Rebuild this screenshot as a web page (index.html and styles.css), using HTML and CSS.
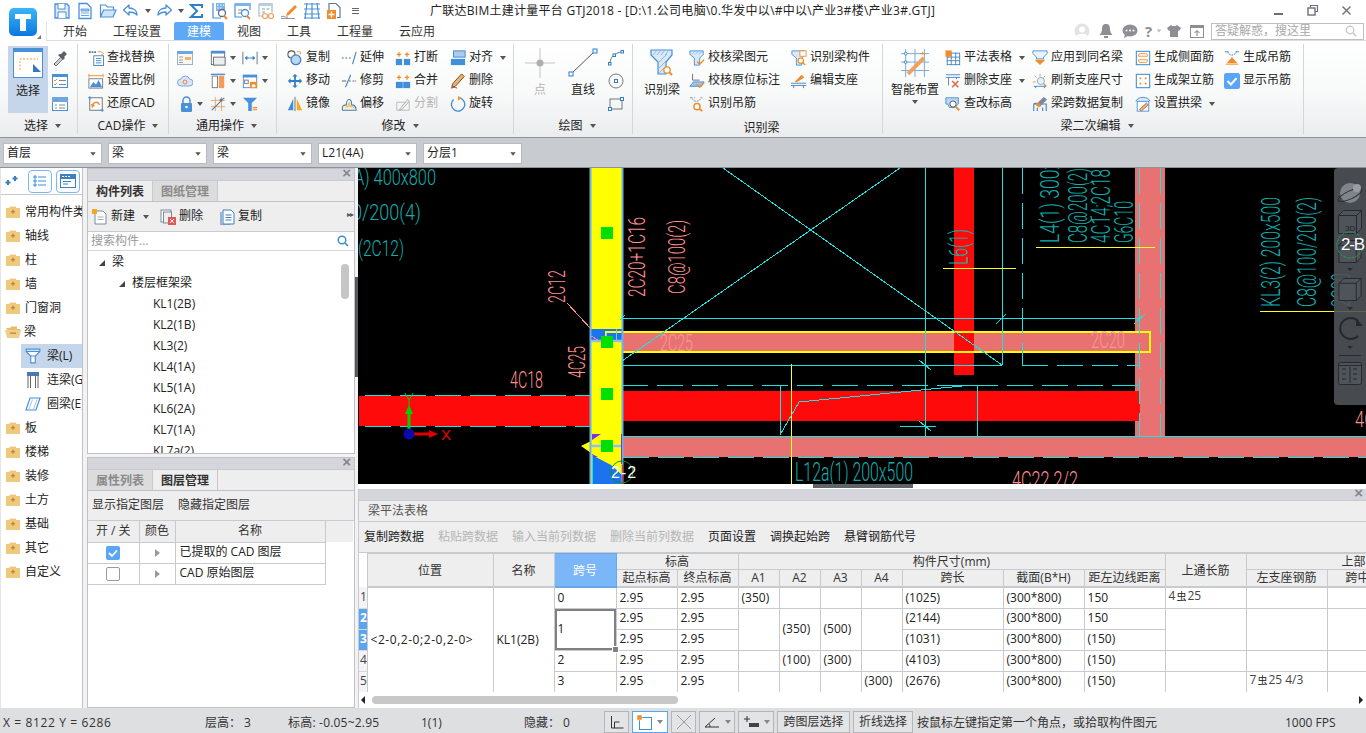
FILE: index.html
```html
<!DOCTYPE html>
<html lang="zh-CN">
<head>
<meta charset="utf-8">
<title>广联达BIM土建计量平台 GTJ2018</title>
<link rel="stylesheet" href="styles.css">
</head>
<body>
<svg class="sprite" xmlns="http://www.w3.org/2000/svg">
<defs>
<linearGradient id="lg" x1="0" y1="0" x2="0" y2="1"><stop offset="0" stop-color="#39b6f6"/><stop offset="1" stop-color="#0b78e0"/></linearGradient>
<symbol id="q-save" viewBox="0 0 18 18"><path d="M2 2h12l2 2v12H2z" fill="#dcebfa" stroke="#4a90d9" stroke-width="1.3"/><path d="M5 2v5h7V2M5 16v-6h8v6" fill="#fff" stroke="#4a90d9"/></symbol>
<symbol id="q-new" viewBox="0 0 18 18"><path d="M3 1.500h8l4 4v11H3z" fill="#fff" stroke="#4a90d9" stroke-width="1.3"/><path d="M5 7h8v2H5zM5 11h8M5 13.500h8" fill="#a9cdf0" stroke="#4a90d9" stroke-width=".8"/></symbol>
<symbol id="q-open" viewBox="0 0 18 18"><path d="M1.500 15V3h5l2 2h6v3" fill="#fff" stroke="#4a90d9" stroke-width="1.200"/><path d="M1.500 15l3-7h12.500l-3 7z" fill="#cfe4f8" stroke="#4a90d9" stroke-width="1.200"/></symbol>
<symbol id="q-undo" viewBox="0 0 18 18"><path d="M7 3L1.500 8 7 13v-3c4 0 6 1 8 3 0-4-3-7-8-7z" fill="#fff" stroke="#4a90d9" stroke-width="1.300" stroke-linejoin="round"/></symbol>
<symbol id="q-redo" viewBox="0 0 18 18"><path d="M11 3l5.500 5L11 13v-3c-4 0-6 1-8 3 0-4 3-7 8-7z" fill="#fff" stroke="#4a90d9" stroke-width="1.300" stroke-linejoin="round"/></symbol>
<symbol id="q-sum" viewBox="0 0 18 18"><path d="M3 3h11v3M14 3H3l6 6-6 6h11v-3" fill="none" stroke="#2f7fc9" stroke-width="2"/></symbol>
<symbol id="q-a" viewBox="0 0 18 18"><path d="M2 1v15h8" fill="none" stroke="#4a90d9" stroke-width="1.200"/><path d="M5 1h9v8H5z" fill="#7fb4e8"/><path d="M6 3h1.500M9 3h1.500M12 3h1.500M6 6h1.500M9 6h1.500" stroke="#fff"/><circle cx="11" cy="11" r="3.500" fill="#fff" stroke="#5a6d80" stroke-width="1.300"/><path d="M13 14l3 3" stroke="#f28c28" stroke-width="2"/></symbol>
<symbol id="q-b" viewBox="0 0 18 18"><path d="M1 1.500h15V8M1 1.500V15h7" fill="#fff" stroke="#4a90d9" stroke-width="1.200"/><path d="M1 1h15v3H1z" fill="#7fb4e8"/><path d="M4 8h4M4 11h3" stroke="#888"/><circle cx="11" cy="11" r="3.500" fill="#fff" stroke="#4a90d9" stroke-width="1.300"/><path d="M13 14l3 3" stroke="#f28c28" stroke-width="2"/></symbol>
<symbol id="q-c" viewBox="0 0 18 18"><path d="M2 1.500h13v9M2 1.500V14h4" fill="#fff" stroke="#a9b8c8" stroke-width="1.200"/><path d="M2 1h13v3H2z" fill="#b9cde2"/><path d="M5 7h3M9.500 7h3M5 10h3" stroke="#7a9"/><circle cx="8" cy="14" r="2.500" fill="#fff" stroke="#f2a061" stroke-width="1.200"/><circle cx="14" cy="14" r="2.500" fill="#fff" stroke="#f2a061" stroke-width="1.200"/></symbol>
<symbol id="q-brush" viewBox="0 0 18 18"><path d="M7 11l8-8 2 2-8 8-3 1z" fill="#f28c28"/><path d="M1 15c3-2 4 1 7 0" fill="none" stroke="#888"/><path d="M1 16.500h14" stroke="#999"/></symbol>
<symbol id="q-grid" viewBox="0 0 18 18"><path d="M1 2h16M1 7h16M1 12h16M1 16h16M4 1l-2 16M9 1v16M14 1l2 16" fill="none" stroke="#4a90d9" stroke-width="1.200"/></symbol>
<symbol id="q-plus" viewBox="0 0 18 18"><path d="M3 8V1.500h7l4 4v10h-3" fill="#fff" stroke="#5a7a9a" stroke-width="1.200"/><path d="M1 8h9v9H1z" fill="#f28c28"/><path d="M5.500 9.500v6M2.500 12.500h6" stroke="#fff" stroke-width="1.400"/></symbol>

<symbol id="r-select" viewBox="0 0 30 30"><rect x=".5" y=".5" width="29" height="29" fill="#fff" stroke="#4a90d9"/><rect width="30" height="4" fill="#4a90d9"/><path d="M7 22V11h18" fill="none" stroke="#f6a623" stroke-dasharray="2 1.500"/><path d="M20 18l8 8h-8z" fill="#3678bb" transform="translate(0 -2)"/></symbol>
<symbol id="r-drop" viewBox="0 0 16 16"><path d="M2 14l7-7 2 2-7 7z" fill="#c9ccd2" stroke="#777"/><path d="M9 4l3-3 3 3-3 3 1 1-2 2-5-5 2-1z" fill="#5c5f66"/></symbol>
<symbol id="r-list" viewBox="0 0 16 16"><rect x=".5" y="1.500" width="15" height="13" fill="#fff" stroke="#4a90d9"/><rect y="1" width="16" height="3" fill="#4a90d9"/><path d="M2 7l1 1 2-2M2 11l1 1 2-2" fill="none" stroke="#f28c28"/><path d="M7 7.500h7M7 11.500h7" stroke="#7a8a9a"/></symbol>
<symbol id="r-prop" viewBox="0 0 16 16"><rect x=".5" y="1.500" width="15" height="13" fill="#fff" stroke="#4a90d9"/><rect y="1" width="16" height="5" fill="#6fa8e0"/><path d="M3 4h2M3 9h2M3 12h2M7 9h6M7 12h6" stroke="#7a8a9a"/></symbol>
<symbol id="r-find" viewBox="0 0 18 18"><path d="M1 2.500h2M4 2.500h2M7 2.500h2" stroke="#6a7785" stroke-width="2"/><path d="M11 2h4l2 2-2 2" fill="none" stroke="#f28c28"/><rect x="6.500" y="6.500" width="11" height="11" fill="#fff" stroke="#3f7fc0"/><path d="M9 9.500h6M9 12h6M9 14.500h6" stroke="#3f7fc0"/></symbol>
<symbol id="r-scale" viewBox="0 0 18 18"><path d="M1 3h16M1 1v4M17 1v4" stroke="#f28c28" fill="none"/><rect x="1" y="6.500" width="15.500" height="10.500" fill="#fff" stroke="#777"/><path d="M2 16l4-6 3 3 3-5 4 8z" fill="#4a90d9"/></symbol>
<symbol id="r-restore" viewBox="0 0 18 18"><rect x="2" y="2" width="14" height="14" fill="#fff" stroke="#5c6b7a"/><path d="M0 2h4M2 0v4M14 16h4M16 14v4" stroke="#4a90d9"/><path d="M5 13c-1-6 6-8 8-3" fill="none" stroke="#f28c28" stroke-width="1.600"/><path d="M3 9l2 4 3-3z" fill="#f28c28"/></symbol>
<symbol id="r-calc" viewBox="0 0 16 16"><rect x=".5" y="1.500" width="15" height="13" fill="#f7f7f7" stroke="#9fb4c8"/><rect y="1" width="16" height="3" fill="#6fa8e0"/><path d="M2 7h4M2 10h4M2 12.500h4" stroke="#999"/><rect x="8" y="7" width="6" height="3" fill="#f6b26b"/></symbol>
<symbol id="r-win" viewBox="0 0 18 18"><rect x="1.500" y="1.500" width="15" height="15" fill="#fff" stroke="#5c6b7a"/><rect x="1" y="1" width="16" height="3" fill="#4a90d9"/><rect x="4" y="8" width="13" height="9" fill="#eee" stroke="#666"/></symbol>
<symbol id="r-arr" viewBox="0 0 18 18"><path d="M1 2v14M17 2v14" stroke="#5c6b7a"/><path d="M4 9h10" stroke="#2f7fc9"/><path d="M3 9l3-2.500v5zM15 9l-3-2.500v5z" fill="#2f7fc9"/></symbol>
<symbol id="r-cloud" viewBox="0 0 16 16"><path d="M4 13a3.500 3.500 0 0 1 0-7 4.500 4.500 0 0 1 8.500 0 3.500 3.500 0 0 1 0 7z" fill="#d7e6f6" stroke="#7fa9d3"/><circle cx="8" cy="9" r="2" fill="none" stroke="#e8824a"/></symbol>
<symbol id="r-col" viewBox="0 0 18 18"><path d="M1 1.500h16" stroke="#4a90d9" stroke-width="1.500"/><rect x="2.500" y="3.500" width="6" height="13" fill="#fff" stroke="#777"/><rect x="10" y="3" width="6" height="14" fill="#f59a5a"/></symbol>
<symbol id="r-winsave" viewBox="0 0 18 18"><rect x="1.500" y="2.500" width="15" height="14" fill="#fff" stroke="#4a90d9"/><rect x="1" y="2" width="16" height="3" fill="#4a90d9"/><rect x="3" y="8" width="4" height="4" fill="#fff" stroke="#777"/><rect x="9" y="10" width="8" height="7" fill="#f28c28"/><rect x="11" y="13" width="4" height="3" fill="#fff"/></symbol>
<symbol id="r-lock" viewBox="0 0 16 16"><rect x="4" y="7" width="11" height="9" rx="1" fill="#4a90d9"/><path d="M6 7V4.500a3.500 3.500 0 0 1 7 0V7" fill="none" stroke="#4a90d9" stroke-width="1.500"/><circle cx="9.500" cy="11" r="1.300" fill="#fff"/></symbol>
<symbol id="r-hash" viewBox="0 0 18 18"><path d="M1 5h16M1 12h16M6 1v16M13 1v16" stroke="#f2a061"/><path d="M2 16L16 2" stroke="#3f7fc0" stroke-width="1.200"/><rect x="11" y="3" width="3" height="3" fill="#777"/></symbol>
<symbol id="r-filter" viewBox="0 0 18 18"><path d="M1 2h16l-6 6v9H7V8z" fill="#4a90d9"/><path d="M12 13h5M12 15.500h5" stroke="#f28c28" stroke-width="1.300"/></symbol>
<symbol id="r-copy" viewBox="0 0 18 18"><circle cx="5" cy="5" r="4" fill="#fff" stroke="#555" stroke-width="1.200"/><circle cx="10" cy="11" r="5.500" fill="#bcd6f0" stroke="#3f7fc0" stroke-width="1.400"/><path d="M11 2h4v3" fill="none" stroke="#f28c28"/></symbol>
<symbol id="r-extend" viewBox="0 0 18 18"><path d="M1 9h2M5 9h2M9 9h2" stroke="#555"/><path d="M13 16l4-14" stroke="#3f7fc0" stroke-width="1.200"/></symbol>
<symbol id="r-break" viewBox="0 0 18 18"><rect x="1" y="10" width="7" height="7" fill="#3f8fdc"/><rect x="10" y="10" width="7" height="7" fill="#3f8fdc"/><path d="M2 5h5M4.500 2.500v5M11 5h5M13.500 2.500v5" stroke="#f28c28" stroke-width="1.500"/></symbol>
<symbol id="r-merge" viewBox="0 0 18 18"><rect x="1" y="10" width="16" height="7" fill="#3f8fdc"/><path d="M9 10v7" stroke="#9cc5ee"/><path d="M2 5h5M4.500 2.500v5M11 5h5M13.500 2.500v5" stroke="#f28c28" stroke-width="1.500"/></symbol>
<symbol id="r-align" viewBox="0 0 18 18"><rect x="4" y="1" width="13" height="7" fill="#a9cdf0" stroke="#3f7fc0"/><rect x="1" y="10" width="16" height="7" fill="#3f8fdc"/></symbol>
<symbol id="r-move" viewBox="0 0 18 18"><path d="M9 1l3 3h-2v4h4V6l3 3-3 3v-2h-4v4h2l-3 3-3-3h2v-4H4v2L1 9l3-3v2h4V4H6z" fill="#2f7fc9"/></symbol>
<symbol id="r-trim" viewBox="0 0 18 18"><path d="M1 9h5" stroke="#555"/><path d="M9 9h2M13 9h2M16 9h1" stroke="#555"/><path d="M5 16L11 2" stroke="#3f7fc0" stroke-width="1.200"/></symbol>
<symbol id="r-del" viewBox="0 0 18 18"><path d="M2 16l4-1 10-11-3-3L3 12z" fill="#e8b36a" stroke="#6b3d1a"/><path d="M1 17c3-1 5-1 7 0" stroke="#b33" fill="none"/></symbol>
<symbol id="r-mirror" viewBox="0 0 18 18"><path d="M1 16L7 3v13z" fill="#3f8fdc"/><path d="M11 3l6 13h-6z" fill="#f5a623"/><path d="M9 1v16" stroke="#666"/></symbol>
<symbol id="r-offset" viewBox="0 0 18 18"><path d="M2 16c-2-5 2-6 4-6 0-8 6-8 6 0 3 0 5 1 5 6z" fill="#fdf1d8" stroke="#3f7fc0" stroke-width="1.200"/><path d="M5 13c0-1 1-1 3-1 0-6 2-6 2 0 2 0 5 0 5 2" fill="none" stroke="#f2a623"/></symbol>
<symbol id="r-split" viewBox="0 0 18 18"><rect x="2" y="7" width="14" height="9" fill="none" stroke="#b8b8b8"/><path d="M6 14l8-10 2 2-8 9-3 1z" fill="#eee" stroke="#aaa"/></symbol>
<symbol id="r-rot" viewBox="0 0 18 18"><path d="M4 4a7.500 7.500 0 1 0 5-2" fill="none" stroke="#3f8fdc" stroke-width="1.500"/><path d="M9 0l4 2.500L9 5z" fill="#f28c28"/></symbol>
<symbol id="r-point" viewBox="0 0 30 30"><path d="M15 0v30M0 15h30" stroke="#c5c5c5"/><circle cx="15" cy="15" r="3.500" fill="#aeaeae"/></symbol>
<symbol id="r-line" viewBox="0 0 30 30"><path d="M3 26L27 3" stroke="#555"/><rect x="1" y="24" width="4" height="4" fill="#fff" stroke="#2f7fc9"/><rect x="25" y="1" width="4" height="4" fill="#fff" stroke="#2f7fc9"/></symbol>
<symbol id="r-arc" viewBox="0 0 16 16"><path d="M2 14C2 7 6 3 14 2" fill="none" stroke="#777"/><rect x=".5" y="12.500" width="2.500" height="2.500" fill="#fff" stroke="#2f7fc9"/><rect x="5" y="4" width="2.500" height="2.500" fill="#fff" stroke="#2f7fc9"/><rect x="13" y=".5" width="2.500" height="2.500" fill="#fff" stroke="#2f7fc9"/></symbol>
<symbol id="r-circ" viewBox="0 0 16 16"><circle cx="8" cy="8" r="7" fill="none" stroke="#777"/><rect x="6.500" y="6.500" width="3" height="3" fill="#fff" stroke="#2f7fc9"/></symbol>
<symbol id="r-rect" viewBox="0 0 16 16"><rect x="2" y="3" width="12" height="10" fill="none" stroke="#777"/><rect x=".5" y="11.500" width="3" height="3" fill="#fff" stroke="#2f7fc9"/><rect x="12.500" y="1.500" width="3" height="3" fill="#fff" stroke="#2f7fc9"/></symbol>
<symbol id="r-beam" viewBox="0 0 24 30"><path d="M1 2h21v5l-6 7v12H8V14L1 7z" fill="#dbe9f7" stroke="#3f8fdc" stroke-width="1.200"/><path d="M3 7l4-5M7 7l4-5M11 7l4-5M15 7l4-5M9 14l8-8M9 20l7-7M9 25l7-7" stroke="#8fb9e4"/><circle cx="17" cy="22" r="3.200" fill="#fff" stroke="#f28c28" stroke-width="1.300"/><path d="M19.500 24.500l2.500 2.500" stroke="#f28c28" stroke-width="2"/></symbol>
<symbol id="r-chk1" viewBox="0 0 18 18"><path d="M1 1h15v4l-4 4v8H6V9L1 5z" fill="#dbe9f7" stroke="#3f8fdc"/><path d="M3 5l4-4M7 5l4-4M11 5l4-4" stroke="#8fb9e4"/><path d="M9 13l3 3 5-5" fill="none" stroke="#f28c28" stroke-width="1.500"/></symbol>
<symbol id="r-chk2" viewBox="0 0 18 18"><path d="M4 1v7h8" fill="none" stroke="#666"/><path d="M1 15h13l3-5H5z" fill="#9cc5ee" stroke="#3f8fdc"/><path d="M9 13l3 3 5-5" fill="none" stroke="#f28c28" stroke-width="1.500"/></symbol>
<symbol id="r-hang" viewBox="0 0 18 18"><path d="M1 2h3M6 2h1M13 2h2" stroke="#6b8299"/><path d="M4 3c1 4 7 4 9 0" fill="none" stroke="#6b8299" stroke-dasharray="2 1"/><circle cx="9" cy="12" r="3.500" fill="#fff" stroke="#f28c28" stroke-width="1.600"/><path d="M12 15l3 2" stroke="#f28c28" stroke-width="2"/></symbol>
<symbol id="r-comp" viewBox="0 0 18 18"><path d="M1 1h15v4l-4 4v8H6V9L1 5z" fill="#dbe9f7" stroke="#3f8fdc"/><rect x="10" y="1" width="7" height="6" fill="#fff" stroke="#f28c28"/><circle cx="11" cy="12" r="3" fill="#fff" stroke="#f28c28" stroke-width="1.300"/><path d="M13 14l3 3" stroke="#f28c28" stroke-width="1.600"/></symbol>
<symbol id="r-edit" viewBox="0 0 18 18"><path d="M4 10l8-8 3 3-8 5z" fill="#f28c28"/><path d="M0 11.500h17M0 14h17" stroke="#3f7fc0"/><path d="M3 14v3M14 14v3" stroke="#3f7fc0"/></symbol>
<symbol id="r-smart" viewBox="0 0 32 32"><path d="M1 6h30M1 15h30M1 24h30M6 1v30M16 1v30M26 1v30" stroke="#6fa8e0"/><path d="M7 26l17-17 3 3-17 17z" fill="#f2a061"/><path d="M24 4v3M21 6h6" stroke="#f28c28"/><circle cx="6" cy="6" r="1.500" fill="#fff" stroke="#3f7fc0"/><circle cx="6" cy="15" r="1.500" fill="#fff" stroke="#3f7fc0"/></symbol>
<symbol id="r-table" viewBox="0 0 18 18"><rect x="2.500" y="3.500" width="14" height="13" fill="#fff" stroke="#3f7fc0"/><path d="M2 8h15M2 12h15M7 3v14M12 3v14" stroke="#3f7fc0"/><rect width="7" height="7" fill="#f28c28" y=".5" x=".5"/></symbol>
<symbol id="r-delsup" viewBox="0 0 18 18"><path d="M1 2h16M1 5h16M4 5v9M13 5v2" stroke="#3f7fc0"/><path d="M8 9l7 7M15 9l-7 7" stroke="#e2684a" stroke-width="1.800"/></symbol>
<symbol id="r-elev" viewBox="0 0 18 18"><path d="M1 2h14v7l-4 4H5L3 9H1z" fill="#bcd6f0" stroke="#3f8fdc"/><circle cx="9" cy="9" r="3.500" fill="#fff" stroke="#555"/><path d="M12 12l4 4" stroke="#f28c28" stroke-width="2.200"/></symbol>
<symbol id="r-apply" viewBox="0 0 18 18"><path d="M1 1h16v3l-4 4v2H5V8L1 4z" fill="#eaf3fb" stroke="#3f8fdc"/><path d="M3 11h12l-6 6z" fill="#f28c28"/></symbol>
<symbol id="r-ref" viewBox="0 0 18 18"><path d="M9 1v3M3 3l2 2M15 3l-2 2M1 10h3" stroke="#f28c28"/><circle cx="10" cy="9" r="4" fill="#eaf3fb" stroke="#6fa8e0"/><path d="M2 15h14M4 15v2M14 15v2" stroke="#3f7fc0"/><path d="M13 12l3 3" stroke="#f28c28" stroke-width="1.600"/></symbol>
<symbol id="r-cdata" viewBox="0 0 18 18"><path d="M2 17V9h14v8M2 9l3-1M6 17v-4M12 17v-4" fill="none" stroke="#3f7fc0" stroke-width="1.200"/><path d="M5 9l8-8 4 3-8 8z" fill="#7a8a9a"/><path d="M4 10l4 3 2-3-3-3z" fill="#f28c28"/></symbol>
<symbol id="r-side" viewBox="0 0 18 18"><rect x="1.500" y="1.500" width="15" height="15" fill="#fff" stroke="#3f8fdc" stroke-width="1.200"/><path d="M4 6a2 2 0 0 1 2-2h6a2 2 0 0 1 2 2v1H4zM4 11h10v1a2 2 0 0 1-2 2H6a2 2 0 0 1-2-2z" fill="none" stroke="#f28c28"/></symbol>
<symbol id="r-stand" viewBox="0 0 18 18"><rect x="1.500" y="1.500" width="15" height="15" fill="#fff" stroke="#3f8fdc" stroke-width="1.200"/><path d="M5 5h2v2H5zM11 5h2v2h-2zM5 11h2v2H5zM11 11h2v2h-2z" fill="#f28c28"/></symbol>
<symbol id="r-arch" viewBox="0 0 18 18"><path d="M1 6C3 0 15 0 17 6" fill="#dbe9f7" stroke="#3f8fdc"/><rect x="2.500" y="6" width="13" height="11" fill="#fff" stroke="#3f8fdc"/><path d="M5 15l8-7 2 2-8 7z" fill="#f2b36a" stroke="#a66"/></symbol>
<symbol id="r-hang2" viewBox="0 0 18 18"><path d="M1 2h4M13 2h4" stroke="#3f7fc0"/><path d="M4 2c2 5 8 5 10 0" fill="none" stroke="#3f7fc0" stroke-dasharray="2 1"/><path d="M9 8l6 7H3z" fill="#f28c28"/><path d="M2 16h14" stroke="#f28c28"/></symbol>
<symbol id="r-check" viewBox="0 0 14 14"><rect width="14" height="14" rx="2" fill="#5aa5f5"/><path d="M3 7l3 3 5-5.500" fill="none" stroke="#fff" stroke-width="1.800"/></symbol>

<symbol id="n-fold" viewBox="0 0 14 12"><path d="M0 2h3l1-1.500h6V2h4v10H0z" fill="#efc97d"/><rect x="5" y="5" width="4" height="1.400" fill="#c98a2c"/><rect x="6.300" y="3.700" width="1.400" height="4" fill="#c98a2c"/></symbol>
<symbol id="n-open" viewBox="0 0 16 12"><path d="M1 2h4l1-1.500h6V3h3v2H3z" fill="#e8bd6a"/><path d="M0 4h16l-2 8H2z" fill="#efcd8a"/><rect x="5" y="6.500" width="6" height="1.400" fill="#c98a2c"/></symbol>
<symbol id="n-beam" viewBox="0 0 14 14"><path d="M1 1h12v2L9 7v6H5V7L1 3z" fill="#fff" stroke="#4a90d9"/><path d="M1 3h12M5 7h4" stroke="#4a90d9"/></symbol>
<symbol id="n-lb" viewBox="0 0 14 16"><rect x="1" y="0" width="12" height="4" fill="#4a78b8"/><path d="M2 4v12M12 4v12M4.500 4v12M9.500 4v12" stroke="#666"/></symbol>
<symbol id="n-ring" viewBox="0 0 16 14"><path d="M5 1h10l-4 12H1z" fill="#fff" stroke="#3f8fdc" stroke-width="1.200"/><path d="M7.500 2.500L4 12M12 2.500L8.500 12" stroke="#9cc5ee"/></symbol>
<symbol id="p-new" viewBox="0 0 16 16"><path d="M3 2h8l3 3v10H3z" fill="#fff" stroke="#7a8a9a"/><rect x="0" y="0" width="5" height="5" fill="#f5a623"/><path d="M5.500 8h6M5.500 10.500h6" stroke="#aaa"/></symbol>
<symbol id="p-del" viewBox="0 0 16 16"><rect x="1" y="1" width="10" height="12" fill="#fff" stroke="#7a8a9a"/><rect x="3.500" y="3" width="8" height="11" fill="#eee" stroke="#7a8a9a"/><rect x="8" y="8" width="8" height="8" fill="#e25858"/><path d="M10 10l4 4M14 10l-4 4" stroke="#fff"/></symbol>
<symbol id="p-copy" viewBox="0 0 16 16"><path d="M4 1h8l3 3v11H4z" fill="#fff" stroke="#3f7fc0"/><path d="M2 3v13h9" fill="none" stroke="#3f7fc0"/><path d="M6.500 6h6M6.500 8.500h6M6.500 11h6" stroke="#3f7fc0"/></symbol>
<symbol id="cube" viewBox="0 0 24 24"><path d="M.5 5.500l5-5h18v18l-5 5H.5z" fill="#4f545b" stroke="#25282c"/><path d="M.5 5.500h18v18M18.500 5.500l5-5" fill="none" stroke="#25282c"/></symbol>
</defs>
</svg>

<div class="app">
  <header class="top">
    <div class="logo-cell">
      <svg class="logo" viewBox="0 0 28 28"><rect width="28" height="28" rx="5" fill="url(#lg)"/><path d="M6 6h16v5h-5v12h-6V11H6z" fill="#fff"/></svg>
      <span class="corner"></span>
    </div>
    <div class="top-main">
      <div class="title-row">
        <div class="qat">
          <svg class="qi"><use href="#q-save"/></svg><svg class="qi"><use href="#q-new"/></svg><svg class="qi"><use href="#q-open"/></svg><svg class="qi"><use href="#q-undo"/></svg><i class="car qc"></i><svg class="qi"><use href="#q-redo"/></svg><i class="car qc"></i><svg class="qi"><use href="#q-sum"/></svg><svg class="qi"><use href="#q-a"/></svg><svg class="qi"><use href="#q-b"/></svg><svg class="qi"><use href="#q-c"/></svg><svg class="qi"><use href="#q-brush"/></svg><svg class="qi"><use href="#q-grid"/></svg><svg class="qi"><use href="#q-plus"/></svg><span class="qmore"></span>
        </div>
        <div class="title">广联达BIM土建计量平台 GTJ2018 - [D:\1.公司电脑\0.华发中以\#中以\产业3#楼\产业3#.GTJ]</div>
        <div class="winbtns">
          <svg width="14" height="14" viewBox="0 0 14 14"><rect x="2" y="9" width="9" height="2" fill="#6b7078"/></svg>
          <svg width="14" height="14" viewBox="0 0 14 14"><path d="M4.500 3.500V1.500h7v6h-2.500" fill="none" stroke="#6b7078" stroke-width="1.200"/><rect x="2" y="4" width="7" height="7" fill="none" stroke="#6b7078" stroke-width="1.400"/></svg>
          <svg width="14" height="14" viewBox="0 0 14 14"><path d="M2.500 2.500l8 8M10.500 2.500l-8 8" stroke="#6b7078" stroke-width="1.400"/></svg>
        </div>
      </div>
      <div class="tab-row">
        <nav class="tabs"><span class="tab">开始</span><span class="tab">工程设置</span><span class="tab active">建模</span><span class="tab">视图</span><span class="tab">工具</span><span class="tab">工程量</span><span class="tab">云应用</span></nav>
        <div class="helpers">
          <svg width="16" height="16" viewBox="0 0 16 16"><circle cx="8" cy="8" r="7.500" fill="#e3e3e3"/><circle cx="8" cy="6.500" r="3" fill="#fff"/><path d="M2.500 13c1-3 10-3 11 0a7.500 7.500 0 0 1-11 0z" fill="#fff"/></svg>
          <svg width="14" height="16" viewBox="0 0 14 16"><path d="M7 1c3 0 4 2 4 5 0 3 1 4 2.500 6h-13C2 10 3 9 3 6c0-3 1-5 4-5z" fill="#8c8f94"/><rect x="5" y="13" width="4" height="2" fill="#8c8f94"/></svg>
          <svg width="16" height="14" viewBox="0 0 16 14"><ellipse cx="8" cy="6.500" rx="7.500" ry="6" fill="#8c8f94"/><path d="M3 10l-1 4 4-2z" fill="#8c8f94"/><circle cx="4.500" cy="6.500" r="1" fill="#fff"/><circle cx="8" cy="6.500" r="1" fill="#fff"/><circle cx="11.500" cy="6.500" r="1" fill="#fff"/></svg>
          <span class="help-q">?</span><i class="car help-car"></i>
          <svg width="14" height="14" viewBox="0 0 14 14"><path d="M4 1L0 4l2 3 1-.5V13h8V6.500l1 .5 2-3-4-3-1.500 1h-3z" fill="#8c8f94"/></svg>
          <svg width="14" height="14" viewBox="0 0 14 14"><rect x=".5" y="1.500" width="13" height="12" fill="#fff" stroke="#8c8f94"/><rect y="1" width="14" height="3" fill="#8c8f94"/><path d="M7 12V7M4.500 9L7 6.500 9.500 9" fill="none" stroke="#777"/></svg>
          <div class="hsearch"><span>答疑解惑，搜这里</span><svg width="12" height="12" viewBox="0 0 12 12"><circle cx="5" cy="5" r="3.800" fill="none" stroke="#c4c4c4" stroke-width="1.200"/><path d="M8 8l3 3" stroke="#c4c4c4" stroke-width="1.400"/></svg></div>
        </div>
      </div>
    </div>
  </header>

  <section class="ribbon">
    <div class="group g-sel">
      <div class="rows">
        <div class="big sel"><svg class="b30"><use href="#r-select"/></svg><span>选择</span></div>
        <svg class="ic sq"><use href="#r-drop"/></svg><svg class="ic sq"><use href="#r-list"/></svg><svg class="ic sq"><use href="#r-prop"/></svg>
      </div>
      <div class="glabel">选择<i class="car"></i></div>
    </div>
    <div class="group g-cad">
      <div class="rows">
        <div class="it"><svg class="ic"><use href="#r-find"/></svg>查找替换</div>
        <div class="it"><svg class="ic"><use href="#r-scale"/></svg>设置比例</div>
        <div class="it"><svg class="ic"><use href="#r-restore"/></svg>还原CAD</div>
      </div>
      <div class="glabel">CAD操作<i class="car"></i></div>
    </div>
    <div class="group g-com">
      <div class="rows">
        <div class="it"><svg class="ic"><use href="#r-calc"/></svg></div>
        <div class="it"><svg class="ic"><use href="#r-cloud"/></svg></div>
        <div class="it"><svg class="ic"><use href="#r-lock"/></svg><i class="car"></i></div>
        <div class="it"><svg class="ic"><use href="#r-win"/></svg><i class="car"></i></div>
        <div class="it"><svg class="ic"><use href="#r-col"/></svg><i class="car"></i></div>
        <div class="it"><svg class="ic"><use href="#r-hash"/></svg><i class="car"></i></div>
        <div class="it"><svg class="ic"><use href="#r-arr"/></svg><i class="car"></i></div>
        <div class="it"><svg class="ic"><use href="#r-winsave"/></svg><i class="car"></i></div>
        <div class="it"><svg class="ic"><use href="#r-filter"/></svg></div>
      </div>
      <div class="glabel">通用操作<i class="car"></i></div>
    </div>
    <div class="group g-mod">
      <div class="rows">
        <div class="it"><svg class="ic"><use href="#r-copy"/></svg>复制</div>
        <div class="it"><svg class="ic"><use href="#r-move"/></svg>移动</div>
        <div class="it"><svg class="ic"><use href="#r-mirror"/></svg>镜像</div>
        <div class="it"><svg class="ic"><use href="#r-extend"/></svg>延伸</div>
        <div class="it"><svg class="ic"><use href="#r-trim"/></svg>修剪</div>
        <div class="it"><svg class="ic"><use href="#r-offset"/></svg>偏移</div>
        <div class="it"><svg class="ic"><use href="#r-break"/></svg>打断</div>
        <div class="it"><svg class="ic"><use href="#r-merge"/></svg>合并</div>
        <div class="it off"><svg class="ic"><use href="#r-split"/></svg>分割</div>
        <div class="it"><svg class="ic"><use href="#r-align"/></svg>对齐<i class="car"></i></div>
        <div class="it"><svg class="ic"><use href="#r-del"/></svg>删除</div>
        <div class="it"><svg class="ic"><use href="#r-rot"/></svg>旋转</div>
      </div>
      <div class="glabel">修改<i class="car"></i></div>
    </div>
    <div class="group g-draw">
      <div class="rows">
        <div class="big off"><svg class="b30"><use href="#r-point"/></svg><span>点</span></div>
        <div class="big"><svg class="b30"><use href="#r-line"/></svg><span>直线</span></div>
        <svg class="ic sq"><use href="#r-arc"/></svg><svg class="ic sq"><use href="#r-circ"/></svg><svg class="ic sq"><use href="#r-rect"/></svg>
      </div>
      <div class="glabel">绘图<i class="car"></i></div>
    </div>
    <div class="group g-rec">
      <div class="rows">
        <div class="big"><svg class="b30"><use href="#r-beam"/></svg><span>识别梁</span></div>
        <div class="it"><svg class="ic"><use href="#r-chk1"/></svg>校核梁图元</div>
        <div class="it"><svg class="ic"><use href="#r-chk2"/></svg>校核原位标注</div>
        <div class="it"><svg class="ic"><use href="#r-hang"/></svg>识别吊筋</div>
        <div class="it"><svg class="ic"><use href="#r-comp"/></svg>识别梁构件</div>
        <div class="it"><svg class="ic"><use href="#r-edit"/></svg>编辑支座</div>
      </div>
      <div class="glabel g-low">识别梁</div>
    </div>
    <div class="group g-two">
      <div class="rows">
        <div class="big"><svg class="b30"><use href="#r-smart"/></svg><span>智能布置</span><i class="car"></i></div>
        <div class="it"><svg class="ic"><use href="#r-table"/></svg>平法表格<i class="car"></i></div>
        <div class="it"><svg class="ic"><use href="#r-delsup"/></svg>删除支座<i class="car"></i></div>
        <div class="it"><svg class="ic"><use href="#r-elev"/></svg>查改标高</div>
        <div class="it"><svg class="ic"><use href="#r-apply"/></svg>应用到同名梁</div>
        <div class="it"><svg class="ic"><use href="#r-ref"/></svg>刷新支座尺寸</div>
        <div class="it"><svg class="ic"><use href="#r-cdata"/></svg>梁跨数据复制</div>
        <div class="it"><svg class="ic"><use href="#r-side"/></svg>生成侧面筋</div>
        <div class="it"><svg class="ic"><use href="#r-stand"/></svg>生成架立筋</div>
        <div class="it"><svg class="ic"><use href="#r-arch"/></svg>设置拱梁<i class="car"></i></div>
        <div class="it"><svg class="ic"><use href="#r-hang2"/></svg>生成吊筋</div>
        <div class="it"><svg class="ic"><use href="#r-check"/></svg>显示吊筋</div>
      </div>
      <div class="glabel">梁二次编辑<i class="car"></i></div>
    </div>
  </section>

  <section class="combos">
    <div class="combo">首层<i class="car"></i></div>
    <div class="combo">梁<i class="car"></i></div>
    <div class="combo">梁<i class="car"></i></div>
    <div class="combo">L21(4A)<i class="car"></i></div>
    <div class="combo">分层1<i class="car"></i></div>
  </section>

  <main class="main">
    <aside class="nav">
      <div class="nav-top">
        <svg width="16" height="12" viewBox="0 0 16 12"><path d="M4 5v5M1.500 7.500h5M11 1v5M8.500 3.500h5" stroke="#3f7fc0" stroke-width="2"/></svg>
        <span class="nav-btn"><svg width="14" height="14" viewBox="0 0 14 14"><path d="M1 2h2v2H1zM1 6h2v2H1zM1 10h2v2H1z" fill="none" stroke="#3f8fdc"/><path d="M5 3h8M5 7h8M5 11h8" stroke="#3f8fdc"/></svg></span>
        <span class="nav-btn"><svg width="16" height="14" viewBox="0 0 16 14"><rect x=".5" y=".5" width="15" height="13" fill="#fff" stroke="#3f7fc0"/><rect width="16" height="5" fill="#3f7fc0"/><path d="M2 2.500h2M5 2.500h2M8 2.500h2" stroke="#fff"/><path d="M3 7.500h8M3 10h5" stroke="#3f7fc0"/></svg></span>
      </div>
      <ul class="nav-list">
        <li><svg class="nf"><use href="#n-fold"/></svg>常用构件类型</li>
        <li><svg class="nf"><use href="#n-fold"/></svg>轴线</li>
        <li><svg class="nf"><use href="#n-fold"/></svg>柱</li>
        <li><svg class="nf"><use href="#n-fold"/></svg>墙</li>
        <li><svg class="nf"><use href="#n-fold"/></svg>门窗洞</li>
        <li><svg class="nf nfo"><use href="#n-open"/></svg>梁</li>
        <li class="sub cur"><svg class="nf2"><use href="#n-beam"/></svg>梁(L)</li>
        <li class="sub"><svg class="nf2"><use href="#n-lb"/></svg>连梁(G)</li>
        <li class="sub"><svg class="nf2"><use href="#n-ring"/></svg>圈梁(E)</li>
        <li><svg class="nf"><use href="#n-fold"/></svg>板</li>
        <li><svg class="nf"><use href="#n-fold"/></svg>楼梯</li>
        <li><svg class="nf"><use href="#n-fold"/></svg>装修</li>
        <li><svg class="nf"><use href="#n-fold"/></svg>土方</li>
        <li><svg class="nf"><use href="#n-fold"/></svg>基础</li>
        <li><svg class="nf"><use href="#n-fold"/></svg>其它</li>
        <li><svg class="nf"><use href="#n-fold"/></svg>自定义</li>
      </ul>
    </aside>

    <div class="side">
      <section class="panel p-list">
        <div class="ptitle"><span class="x">×</span></div>
        <div class="ptabs"><span class="ptab on">构件列表</span><span class="ptab">图纸管理</span></div>
        <div class="ptools">
          <span class="pt"><svg class="pi"><use href="#p-new"/></svg>新建<i class="car"></i></span>
          <span class="pt"><svg class="pi"><use href="#p-del"/></svg>删除</span>
          <span class="pt"><svg class="pi"><use href="#p-copy"/></svg>复制</span>
          <span class="more">▸▸</span>
        </div>
        <div class="psearch"><span>搜索构件...</span><svg width="12" height="12" viewBox="0 0 12 12"><circle cx="5" cy="5" r="3.800" fill="none" stroke="#2f8fd0" stroke-width="1.400"/><path d="M8 8l3 3" stroke="#2f8fd0" stroke-width="1.600"/></svg></div>
        <div class="tree">
          <div class="lv1"><i class="tri"></i>梁</div>
          <div class="lv2"><i class="tri"></i>楼层框架梁</div>
          <div class="lv3">KL1(2B)</div>
          <div class="lv3">KL2(1B)</div>
          <div class="lv3">KL3(2)</div>
          <div class="lv3">KL4(1A)</div>
          <div class="lv3">KL5(1A)</div>
          <div class="lv3">KL6(2A)</div>
          <div class="lv3">KL7(1A)</div>
          <div class="lv3">KL7a(2)</div>
          <span class="vthumb"></span>
        </div>
      </section>
      <section class="panel p-layer">
        <div class="ptitle"><span class="x">×</span></div>
        <div class="ptabs"><span class="ptab">属性列表</span><span class="ptab on">图层管理</span></div>
        <div class="ltools"><span>显示指定图层</span><span>隐藏指定图层</span></div>
        <table class="ltable">
          <colgroup><col class="c1"><col class="c2"><col class="c3"><col class="c4"></colgroup>
          <thead><tr><th>开 / 关</th><th>颜色</th><th>名称</th><th class="fill"></th></tr></thead>
          <tbody>
            <tr><td class="ctr"><svg class="cb"><use href="#r-check"/></svg></td><td class="ctr"><i class="play"></i></td><td>已提取的 CAD 图层</td></tr>
            <tr><td class="ctr"><span class="cbx"></span></td><td class="ctr"><i class="play"></i></td><td>CAD 原始图层</td></tr>
          </tbody>
        </table>
      </section>
    </div>

    <div class="split"><span class="grip"></span></div>

    <div class="work">
      <div class="canvas">
        <svg class="draw" viewBox="358 168 1008 316" xmlns="http://www.w3.org/2000/svg">
          <rect x="358" y="168" width="1008" height="316" fill="#000"/>
          <!-- beams -->
          <rect x="1135" y="168" width="30" height="268" fill="#e87272"/>
          <rect x="622" y="333" width="527" height="18" fill="#e87272"/>
          <rect x="954" y="168" width="20" height="207" fill="#ff0a0a"/>
          <rect x="359" y="396" width="232" height="30" fill="#ff0a0a"/>
          <rect x="622" y="391" width="517" height="30" fill="#ff0a0a"/>
          <rect x="1139" y="404" width="1" height="10" fill="#ff0a0a"/>
          <rect x="623" y="436" width="743" height="21" fill="#e87272"/>
          <path d="M622 332h528v20H622" fill="none" stroke="#ffff00" stroke-width="2"/>
          <!-- column -->
          <rect x="591" y="168" width="31" height="316" fill="#ffff00"/>
          <rect x="591" y="329" width="31" height="13" fill="#1b74ee"/>
          <path d="M606 338v-6h16" fill="none" stroke="#ffff00" stroke-width="2"/>
          <path d="M592 455l19 10 11 10v9h-29z" fill="#1b74ee"/>
          <path d="M592 434h9l-9 6zM592 454l6 3h-6z" fill="#8030e0"/>
          <path d="M581 446l10-5v12z" fill="#ffff00"/>
          <path d="M590.500 168v316M622.500 168v316" stroke="#6ab0f0" stroke-width="2" fill="none"/>
          <path d="M591 341h31M591 446h31" stroke="#8cc0f0" stroke-width="2.500"/>
          <g class="crisp">
            <path d="M616 329v12M606 333v4" stroke="#8cc0f0"/>
            <path d="M621 434v30" stroke="#8030e0"/>
            <path d="M622 465v19" stroke="#ff3030"/>
            <path d="M592 455v29" stroke="#19e3e3"/>
            <!-- cyan grid -->
            <g stroke="#19e3e3" fill="none">
              <path d="M723 168L1002 365M622 361L900 168"/>
              <path d="M622 318h517M622 365h380M925 168v268M1002 168v197M977 385v51M780 385v50M623 436h743"/>
              <path d="M780 435l19-33 173-17"/>
              <path d="M1022 168v197M622 385h518M1139 168v268M1160 168v268M1022 365h117M365 395h225M365 426h225M623 457h743" stroke-dasharray="26 9"/>
              <path d="M996 324l10-10M1134 324l11-10M620 320l5-5M919 360l12 10M919 421l12 10M900 426h36"/>
            </g>
            <path d="M791 364v120M943 268h73M1036 247h119M1260 311h106" stroke="#ffff20" fill="none"/>
            <path d="M567 303l24 26M591 336l14 8" stroke="#ff8a8a"/>
          </g>
          <!-- green grips -->
          <g fill="#00e000"><rect x="601" y="227" width="12" height="12"/><rect x="601" y="336" width="12" height="12"/><rect x="601" y="388" width="12" height="12"/><rect x="601" y="440" width="12" height="12"/></g>
          <!-- teal notes -->
          <g class="cad teal">
            <text x="354" y="185" font-size="22" textLength="82" lengthAdjust="spacingAndGlyphs">A) 400x800</text>
            <text x="352" y="220" font-size="22" textLength="69" lengthAdjust="spacingAndGlyphs">0/200(4)</text>
            <text x="358" y="256" font-size="22" textLength="46" lengthAdjust="spacingAndGlyphs">(2C12)</text>
            <text x="795" y="481" font-size="25" textLength="118" lengthAdjust="spacingAndGlyphs">L12a(1) 200x500</text>
            <text transform="translate(968 265) rotate(-90)" font-size="25" textLength="36" lengthAdjust="spacingAndGlyphs">L6(1)</text>
            <text transform="translate(1059 243) rotate(-90)" font-size="25" textLength="82" lengthAdjust="spacingAndGlyphs">L4(1) 300x</text>
            <text transform="translate(1087 243) rotate(-90)" font-size="25" textLength="75" lengthAdjust="spacingAndGlyphs">C8@200(2)</text>
            <text transform="translate(1110 243) rotate(-90)" font-size="25" textLength="74" lengthAdjust="spacingAndGlyphs">4C14;2C18</text>
            <text transform="translate(1133 243) rotate(-90)" font-size="25" textLength="42" lengthAdjust="spacingAndGlyphs">G6C10</text>
            <text transform="translate(1280 307) rotate(-90)" font-size="25" textLength="110" lengthAdjust="spacingAndGlyphs">KL3(2) 200x500</text>
            <text transform="translate(1316 307) rotate(-90)" font-size="25" textLength="110" lengthAdjust="spacingAndGlyphs">C8@100/200(2)</text>
            <text transform="translate(1350 307) rotate(-90)" font-size="25" textLength="34" lengthAdjust="spacingAndGlyphs">2C20</text>
          </g>
          <!-- pink notes -->
          <g class="cad pink">
            <text transform="translate(565 303) rotate(-90)" font-size="24" textLength="33" lengthAdjust="spacingAndGlyphs">2C12</text>
            <text transform="translate(645 297) rotate(-90)" font-size="24" textLength="80" lengthAdjust="spacingAndGlyphs">2C20+1C16</text>
            <text transform="translate(685 294) rotate(-90)" font-size="24" textLength="74" lengthAdjust="spacingAndGlyphs">C8@100(2)</text>
            <text transform="translate(585 378) rotate(-90)" font-size="24" textLength="32" lengthAdjust="spacingAndGlyphs">4C25</text>
            <text x="510" y="388" font-size="23" textLength="33" lengthAdjust="spacingAndGlyphs">4C18</text>
            <text x="1012" y="488" font-size="24" textLength="66" lengthAdjust="spacingAndGlyphs">4C22 2/2</text>
            <text x="1355" y="427" font-size="22" textLength="20" lengthAdjust="spacingAndGlyphs">4C</text>
            <text class="dim" x="660" y="351" font-size="24" textLength="33" lengthAdjust="spacingAndGlyphs">2C25</text>
            <text class="dim" x="1091" y="348" font-size="24" textLength="34" lengthAdjust="spacingAndGlyphs">2C20</text>
          </g>
          <!-- section mark -->
          <circle cx="622" cy="472" r="11" fill="none" stroke="#1a8a1a"/>
          <text class="cad2 white sp" x="611" y="478" font-size="16">2-2</text>
          <!-- axes -->
          <path d="M409 434v-22" stroke="#00d000" stroke-width="3"/><path d="M409 405l-4 9h8z" fill="#00d000"/>
          <path d="M405 393l4 7 4-7M409 400v6" stroke="#00d000" fill="none"/>
          <path d="M409 434h22" stroke="#e00000" stroke-width="3"/><path d="M438 434l-9-4v8z" fill="#e00000"/>
          <circle cx="409" cy="434" r="5.500" fill="#0a0aa8"/>
          <text class="cad2 axisx" x="441" y="440" font-size="15">X</text>
          <!-- view cube panel -->
          <path d="M1366 168h-28a4 4 0 0 0-4 4v229a4 4 0 0 0 4 4h28z" fill="#4f5358" fill-opacity=".9"/>
          <g>
            <circle cx="1350" cy="193" r="10" fill="#80858c"/><ellipse cx="1350" cy="195" rx="13" ry="4" fill="none" stroke="#2a2d31" transform="rotate(-25 1350 195)"/><circle cx="1357" cy="188" r="4" fill="#9a9ea4"/>
            <use href="#cube" x="1338" y="210" width="24" height="24"/>
            <text class="cad2 cubet" x="1345" y="231" font-size="8">3D</text>
            <use href="#cube" x="1338" y="240" width="24" height="23"/>
            <circle cx="1350" cy="245" r="13" fill="none" stroke="#2a9a5a" stroke-dasharray="3 1"/>
            <text class="cad2 white" x="1341" y="250" font-size="17" textLength="24" lengthAdjust="spacing">2-B</text>
            <path d="M1347 268l3 3 3-3z" fill="#26292d"/>
            <use href="#cube" x="1338" y="278" width="24" height="23"/>
            <path d="M1347 307l3 3 3-3z" fill="#26292d"/>
            <path d="M1358 321a10.500 10.500 0 1 0 0 15" fill="none" stroke="#26292d" stroke-width="2"/><path d="M1356 318v8h7z" fill="#26292d"/>
            <path d="M1347 346l3 3 3-3z" fill="#26292d"/>
            <path d="M1339 355.500h22" stroke="#26292d"/>
            <rect x="1338.500" y="362.500" width="23" height="22" rx="2" fill="#4f545b" stroke="#26292d"/>
            <path d="M1342 369h4M1342 374h4M1342 379h4M1353 369h4M1353 374h4M1353 379h4M1350 367v16M1339 365.500h22" stroke="#26292d"/>
          </g>
        </svg>
        <span class="hthumb"></span>
      </div>

      <section class="grid-panel">
        <div class="ptitle"><span class="x">×</span></div>
        <div class="gtitle">梁平法表格</div>
        <div class="gtools"><span>复制跨数据</span><span class="dis">粘贴跨数据</span><span class="dis">输入当前列数据</span><span class="dis">删除当前列数据</span><span>页面设置</span><span>调换起始跨</span><span>悬臂钢筋代号</span></div>
        <div class="gwrap">
          <table class="gt">
            <colgroup><col class="w8"><col class="w126"><col class="w61"><col class="w62"><col class="w61"><col class="w61"><col class="w41"><col class="w41"><col class="w41"><col class="w41"><col class="w101"><col class="w81"><col class="w81"><col class="w81"><col class="w81"><col class="w81"></colgroup>
            <thead>
              <tr class="h1"><th rowspan="2" class="rn"></th><th rowspan="2">位置</th><th rowspan="2">名称</th><th rowspan="2" class="hsel">跨号</th><th colspan="2">标高</th><th colspan="7">构件尺寸(mm)</th><th rowspan="2">上通长筋</th><th colspan="2" class="up">上部</th></tr>
              <tr class="h2"><th>起点标高</th><th>终点标高</th><th>A1</th><th>A2</th><th>A3</th><th>A4</th><th>跨长</th><th>截面(B*H)</th><th>距左边线距离</th><th>左支座钢筋</th><th class="clipl">跨中</th></tr>
            </thead>
            <tbody>
              <tr><td class="rn">1</td><td rowspan="5" class="pos">&lt;2-0,2-0;2-0,2-0&gt;</td><td rowspan="5">KL1(2B)</td><td>0</td><td>2.95</td><td>2.95</td><td>(350)</td><td></td><td></td><td></td><td>(1025)</td><td>(300*800)</td><td>150</td><td class="rb">4<span class="rebar">⾍</span>25</td><td></td><td></td></tr>
              <tr><td class="rn rs">2</td><td rowspan="2" class="cell-sel">1</td><td>2.95</td><td>2.95</td><td rowspan="2"></td><td rowspan="2">(350)</td><td rowspan="2">(500)</td><td rowspan="2"></td><td>(2144)</td><td>(300*800)</td><td>150</td><td rowspan="2"></td><td rowspan="2"></td><td rowspan="2"></td></tr>
              <tr><td class="rn rs">3</td><td>2.95</td><td>2.95</td><td>(1031)</td><td>(300*800)</td><td>(150)</td></tr>
              <tr><td class="rn">4</td><td>2</td><td>2.95</td><td>2.95</td><td></td><td>(100)</td><td>(300)</td><td></td><td>(4103)</td><td>(300*800)</td><td>(150)</td><td></td><td></td><td></td></tr>
              <tr><td class="rn">5</td><td>3</td><td>2.95</td><td>2.95</td><td></td><td></td><td></td><td>(300)</td><td>(2676)</td><td>(300*800)</td><td>(150)</td><td></td><td class="rb">7<span class="rebar">⾍</span>25 4/3</td><td></td></tr>
            </tbody>
          </table>
        </div>
        <div class="hscroll"><i class="al"></i><span class="thumb"></span><i class="ar"></i></div>
      </section>
    </div>
  </main>

  <footer class="status">
    <span class="s-xy">X = 8122 Y = 6286</span>
    <span class="s-h">层高： 3</span>
    <span class="s-el">标高: -0.05~2.95</span>
    <span class="s-n">1(1)</span>
    <span class="s-hide">隐藏： 0</span>
    <span class="sb sb1"><svg width="14" height="14" viewBox="0 0 14 14"><path d="M1.500 1v12h12M4.500 7v6M4.500 7h5" fill="none" stroke="#333"/></svg></span>
    <span class="sb sb2"><svg width="15" height="15" viewBox="0 0 15 15"><rect x="2.500" y="2.500" width="12" height="12" fill="#fff" stroke="#3f8fdc"/><rect width="5" height="5" fill="#f28c28" stroke="#fff" stroke-width=".5"/></svg><i class="car"></i></span>
    <span class="sb sb3"><svg width="16" height="16" viewBox="0 0 16 16"><path d="M1 1l14 14M15 1L1 15" stroke="#9a9a9a"/></svg></span>
    <span class="sb sb4"><svg width="16" height="14" viewBox="0 0 16 14"><path d="M1 12h14M1 12L11 3" stroke="#333"/><path d="M5 9a4 4 0 0 1 1 3" fill="none" stroke="#333"/></svg><i class="car"></i></span>
    <span class="sb sb5"><svg width="16" height="14" viewBox="0 0 16 14"><path d="M4 1v6M1 4h6" stroke="#333"/><rect x="6" y="8" width="10" height="4" fill="#444"/></svg><i class="car"></i></span>
    <span class="sb sbt1">跨图层选择</span>
    <span class="sb sbt2">折线选择</span>
    <span class="s-msg">按鼠标左键指定第一个角点，或拾取构件图元</span>
    <span class="s-fps">1000 FPS</span>
  </footer>
</div>
</body>
</html>
```

FILE: styles.css
```css
* { box-sizing: border-box; }
html, body { margin: 0; height: 100%; overflow: hidden; }
body { font: 12px/1.2 "Open Sans", "Noto Sans CJK SC", sans-serif; color: #222; background: #f2f2f2; }
.sprite { position: absolute; width: 0; height: 0; }
.app { width: 1366px; height: 733px; display: flex; flex-direction: column; overflow: hidden; }
i { font-style: normal; }
.car { display: inline-block; width: 0; height: 0; border-top: 4px solid #555; border-left: 3.5px solid transparent; border-right: 3.5px solid transparent; margin-left: 4px; flex: none; }

/* top */
.top { height: 41px; display: flex; background: #fff; flex: none; }
.logo-cell { width: 46px; padding: 8px 0 0 9px; position: relative; }
.logo { width: 28px; height: 28px; display: block; }
.corner { position: absolute; left: 37px; top: 35px; border-bottom: 4px solid #777; border-left: 4px solid transparent; }
.top-main { flex: 1; display: flex; flex-direction: column; min-width: 0; }
.title-row { height: 22px; display: flex; align-items: center; }
.qat { width: 384px; padding-left: 7px; display: flex; align-items: center; gap: 5px; }
.qi { width: 18px; height: 18px; flex: none; }
.qc { margin: 0 -1px 0 0; }
.qmore { width: 7px; height: 6px; border-top: 1px solid #666; border-bottom: 4px double #666; margin-left: 3px; }
.title { font-size: 12px; letter-spacing: .26px; white-space: nowrap; color: #222; }
.winbtns { margin-left: auto; display: flex; gap: 20px; padding-right: 12px; }
.tab-row { height: 19px; display: flex; border-left: 1px solid #e0e0e0; border-bottom: 1px solid #dcdcdc; }
.tabs { display: flex; padding-left: 3px; }
.tab { padding: 0 13px; line-height: 19px; white-space: nowrap; color: #333; }
.tab.active { background: #5ea9f5; color: #fff; border-radius: 2px 2px 0 0; }
.helpers { margin-left: auto; display: flex; align-items: center; gap: 9px; padding-right: 2px; }
.help-q { font-size: 15px; color: #8c8f94; font-weight: 700; width: 10px; margin-left: -2px; }
.help-car { border-top-color: #bbb; margin: 0 -4px 0 -8px; transform: scale(.8); }
.hsearch { width: 153px; height: 17px; border: 1px solid #bfbfbf; display: flex; align-items: center; justify-content: space-between; padding: 0 6px 0 3px; margin-left: -2px; color: #a8a8a8; }

/* ribbon */
.ribbon { height: 97px; flex: none; display: flex; padding: 3px 0; background: linear-gradient(#fff 0%, #f8f9f9 55%, #eaecee 100%); border-bottom: 1px solid #8f9297; }
.group { display: flex; flex-direction: column; border-right: 1px solid #d4d6d8; flex: none; }
.rows { height: 71px; padding-top: 2px; display: grid; grid-auto-flow: column; grid-template-rows: repeat(3, 23px); align-items: center; }
.glabel { flex: 1; display: flex; align-items: center; justify-content: center; color: #222; padding-top: 3px; }
.glabel.g-low { padding-top: 6px; }
.glabel .car { margin-left: 7px; }
.it { display: flex; align-items: center; gap: 3px; white-space: nowrap; color: #222; height: 23px; }
.it.off, .big.off { color: #b5b5b5; }
.ic { width: 16px; height: 16px; flex: none; }
.big { grid-row: 1 / 4; display: flex; flex-direction: column; align-items: center; height: 67px; white-space: nowrap; align-self: start; padding-top: 2px; }
.big span { margin-top: 4px; line-height: 16px; }
.b30 { width: 30px; height: 30px; flex: none; }
.big .car { margin: 2px 0 0; }
.big.sel { background: #c5d5ea; width: 40px; padding-top: 2px; }
.big.sel span { margin-top: 5px; }
.sq { justify-self: start; }
.g-sel { width: 78px; padding-left: 8px; }
.g-sel .rows { grid-template-columns: 44px 20px; }
.g-cad { width: 91px; padding-left: 10px; }
.g-com { width: 108px; padding-left: 8px; }
.g-com .rows { grid-template-columns: 33px 32px auto; }
.g-com .it .car { margin-left: 1px; }
.g-mod { width: 237px; padding-left: 10px; }
.g-mod .rows { grid-template-columns: 54px 54px 55px auto; }
.g-draw { width: 119px; padding-left: 8px; }
.g-draw .rows { grid-template-columns: 36px 50px 16px; }
.g-rec { width: 250px; padding-left: 8px; }
.g-rec .rows { grid-template-columns: 48px 102px auto; }
.g-rec .big { width: 42px; justify-self: start; }
.g-two { width: 421px; padding-left: 8px; }
.g-two .rows { grid-template-columns: 54px 87px 103px 89px auto; }
.g-two .big { width: 48px; justify-self: start; }

/* combos */
.combos { height: 30px; flex: none; background: #c8cbd0; display: flex; gap: 6px; padding: 5px 0 0 3px; border-bottom: 1px solid #8f9297; }
.combo { width: 99px; height: 21px; background: #fff; border: 1px solid #b8bbc0; padding: 0 3px; display: flex; align-items: center; justify-content: space-between; }
.combo .car { margin-right: 2px; transform: scale(.9); }

/* main */
.main { flex: 1; min-height: 0; display: flex; background: #f2f2f2; }
.nav { width: 83px; flex: none; background: #fff; border-right: 1px solid #c0c2c8; border-left: 1px solid #e5e5e5; display: flex; flex-direction: column; }
.nav-top { height: 27px; flex: none; display: flex; align-items: center; gap: 4px; padding-left: 3px; border-bottom: 1px solid #c8cad0; }
.nav-top > svg { margin-right: 4px; }
.nav-btn { width: 24px; height: 23px; border: 1px solid #7cb8f2; border-radius: 4px; background: #fafcff; display: flex; align-items: center; justify-content: center; }
.nav-list { list-style: none; margin: 5px 0 0; padding: 0; }
.nav-list li { height: 24px; display: flex; align-items: center; white-space: nowrap; overflow: hidden; padding-left: 5px; }
.nf { width: 14px; height: 12px; margin-right: 5px; flex: none; }
.nfo { width: 16px; margin: 0 3px 0 -1px; }
.nav-list .sub { margin-left: 20px; padding-left: 4px; }
.nav-list .cur { background: #c5d5ea; }
.nf2 { width: 16px; height: 16px; margin-right: 6px; flex: none; }

.side { width: 268px; margin-left: 4px; flex: none; display: flex; flex-direction: column; gap: 3px; }
.panel { background: #fff; border: 1px solid #c0c2c8; display: flex; flex-direction: column; overflow: hidden; }
.p-list { height: 286px; flex: none; }
.p-layer { flex: 1; min-height: 0; }
.ptitle { height: 11px; flex: none; background: #d4d6db; position: relative; }
.x { position: absolute; right: 3px; top: -5px; color: #85878c; font: 700 15px/18px "Liberation Sans", sans-serif; }
.ptabs { height: 22px; flex: none; display: flex; background: #eee; border-bottom: 1px solid #c0c2c8; border-top: 1px solid #c8cad0; }
.ptab { width: 65px; text-align: center; line-height: 21px; background: #dcdcdc; color: #8a8a8a; font-weight: 700; border-right: 1px solid #c8cad0; }
.ptab.on { background: #eee; color: #333; }
.ptools { height: 30px; flex: none; background: #eee; display: flex; align-items: center; border-bottom: 1px solid #c8cad0; padding-left: 4px; gap: 16px; position: relative; }
.pt { display: flex; align-items: center; gap: 3px; }
.pt .car { margin: 0 -5px 0 5px; }
.pi { width: 16px; height: 16px; }
.more { position: absolute; right: 1px; top: 7px; color: #555; font-size: 8px; letter-spacing: -1px; }
.psearch { height: 19px; flex: none; display: flex; align-items: center; justify-content: space-between; padding: 0 5px 0 3px; color: #999; border-bottom: 1px solid #d8d8d8; }
.tree { flex: 1; position: relative; overflow: hidden; color: #222; }
.tree div { height: 21px; line-height: 21px; white-space: nowrap; }
.lv1 { padding-left: 11px; }
.lv2 { padding-left: 31px; }
.lv3 { padding-left: 65px; }
.tri { display: inline-block; width: 0; height: 0; border-bottom: 6px solid #444; border-left: 6px solid transparent; margin-right: 7px; vertical-align: 0; }
.vthumb { position: absolute; right: 5px; top: 13px; width: 8px; height: 35px; background: #c6c6c6; border-radius: 4px; }
.ltools { height: 30px; flex: none; background: #eee; border-bottom: 1px solid #c8cad0; display: flex; align-items: center; gap: 14px; padding-left: 4px; color: #333; }
.ltable { border-collapse: collapse; table-layout: fixed; width: 265px; }
.ltable .c1 { width: 51px; } .ltable .c2 { width: 36px; } .ltable .c3 { width: 150px; } .ltable .c4 { width: 28px; }
.ltable th { height: 21px; font-weight: 400; background: #eee; border: 1px solid #c8cad0; border-top: 0; padding: 0; color: #333; }
.ltable th.fill { border: 0; }
.ltable td { height: 21px; border: 1px solid #c8cad0; padding: 0 4px; white-space: nowrap; }
.ltable td.ctr { text-align: center; padding: 0; }
.ltable th:first-child, .ltable td:first-child { border-left: 0; }
.cb { width: 14px; height: 14px; display: block; margin: auto; }
.cbx { display: block; width: 14px; height: 14px; margin: auto; border: 1px solid #999; border-radius: 2px; background: #fff; }
.play { display: inline-block; width: 0; height: 0; border-left: 5px solid #999; border-top: 4px solid transparent; border-bottom: 4px solid transparent; vertical-align: middle; }

.split { width: 3px; flex: none; background: #f2f2f2; position: relative; }
.grip { position: absolute; left: 0; top: 109px; width: 3px; height: 100px; background: #55585c; }

.work { flex: 1; min-width: 0; display: flex; flex-direction: column; gap: 5px; background: #fff; }
.canvas { height: 316px; flex: none; position: relative; }
.draw { display: block; width: 1008px; height: 316px; }
.crisp { shape-rendering: crispEdges; }
.hthumb { position: absolute; left: 455px; bottom: -4px; width: 100px; height: 4px; background: #5f636a; }
.cad { font-family: Roboto, "Liberation Sans Narrow", sans-serif; font-weight: 300; }
.cad2 { font-family: "Liberation Sans", sans-serif; }
.sp { letter-spacing: 1px; }
.teal { fill: #12adad; }
.pink { fill: #ff8e8e; }
.pink .dim { fill: #f59a9a; }
.white { fill: #fff; }
.axisx { fill: #f00000; }
.cubet { fill: #1f2226; }

.grid-panel { flex: 1; min-height: 0; background: #fff; display: flex; flex-direction: column; border-left: 1px solid #c8cad0; overflow: hidden; }
.gtitle { height: 22px; flex: none; background: #eee; border-top: 1px solid #c8cad0; border-bottom: 1px solid #c8cad0; line-height: 20px; padding-left: 9px; color: #555; }
.gtools { height: 31px; flex: none; background: #eee; border-bottom: 1px solid #c8cad0; display: flex; align-items: center; gap: 14px; padding-left: 5px; }
.gtools .dis { color: #b5b5b5; }
.gwrap { overflow: hidden; flex: none; height: 139px; width: 1007px; }
.gt { border-collapse: collapse; table-layout: fixed; width: 1010px; }
.w8 { width: 8px; } .w126 { width: 126px; } .w61 { width: 61px; } .w62 { width: 62px; } .w41 { width: 41px; } .w101 { width: 101px; } .w81 { width: 81px; }
.gt th { font-weight: 400; background: #eee; border: 1px solid #c8cad0; padding: 0; color: #333; white-space: nowrap; overflow: hidden; }
.gt .h1 th { height: 16px; line-height: 15px; }
.gt .h2 th { height: 17px; line-height: 16px; }
.gt thead th { border-bottom-width: 2px; }
.gt .h1 th { border-bottom-width: 1px; }
.gt .h1 th[rowspan] { border-bottom-width: 2px; }
.gt th.hsel { background: #7ab6f8; color: #fff; border-color: #6aa8ee; }
.gt th.up { text-align: left; padding-left: 95px; }
.gt th.clipl { text-align: left; padding-left: 18px; }
.gt th.rn { background: #fff; border: 0; }
.gt td { height: 21px; border: 1px solid #c8cad0; padding: 0 3px; white-space: nowrap; overflow: hidden; color: #222; }
.gt td.rn { padding: 0; background: #f4f4f4; border: 0; border-bottom: 1px solid #d8d8d8; font-size: 12px; overflow: hidden; color: #444; text-indent: 1px; }
.gt td.rs { background: #5aa5f0; color: #fff; font-weight: 700; }
.gt td.pos { padding-left: 3px; letter-spacing: .55px; }
.gt td.rb { color: #444; padding-bottom: 3px; }
.gt td.cell-sel { box-shadow: inset 0 0 0 2px #808080; position: relative; overflow: visible; vertical-align: middle; }
.gt td.cell-sel::after { content: ""; position: absolute; right: -3px; bottom: -3px; width: 5px; height: 5px; background: #808080; border: 1px solid #fff; }
.rebar { font-size: 10px; font-family: "Noto Sans CJK SC", sans-serif; margin: 0 1px; color: #222; }
.hscroll { height: 17px; flex: none; position: relative; background: #fff; border-bottom: 1px solid #c8cad0; display: flex; align-items: center; padding: 0 2px; }
.thumb { width: 306px; height: 8px; background: #c8c8c8; border-radius: 4px; margin-left: 7px; }
.al, .ar { width: 0; height: 0; border-top: 4px solid transparent; border-bottom: 4px solid transparent; }
.al { border-right: 4px solid #222; }
.ar { border-left: 4px solid #222; margin-left: auto; margin-right: 1px; }

/* status */
.status { height: 25px; flex: none; background: #dedfe1; display: flex; align-items: flex-end; color: #333; position: relative; white-space: nowrap; }
.status > span:not(.sb) { align-self: center; padding-top: 5px; }
.s-xy { width: 205px; padding-left: 3px; letter-spacing: .62px; }
.s-h { width: 83px; }
.s-el { width: 133px; letter-spacing: .2px; }
.s-n { width: 103px; }
.s-hide { width: 80px; }
.sb { height: 22px; border: 1px solid #b4b6ba; background: #e3e4e6; display: flex; align-items: center; justify-content: center; margin-right: 3px; flex: none; }
.sb .car { margin-left: 5px; border-top-color: #888; }
.sb1 { width: 25px; margin-right: 3px; }
.sb2 { width: 36px; background: #fff; border-color: #5aa5f0; }
.sb3 { width: 25px; }
.sb4, .sb5 { width: 36px; }
.sbt1 { width: 73px; }
.sbt2 { width: 60px; margin-right: 4px; }
.s-msg { width: 368px; }
```
